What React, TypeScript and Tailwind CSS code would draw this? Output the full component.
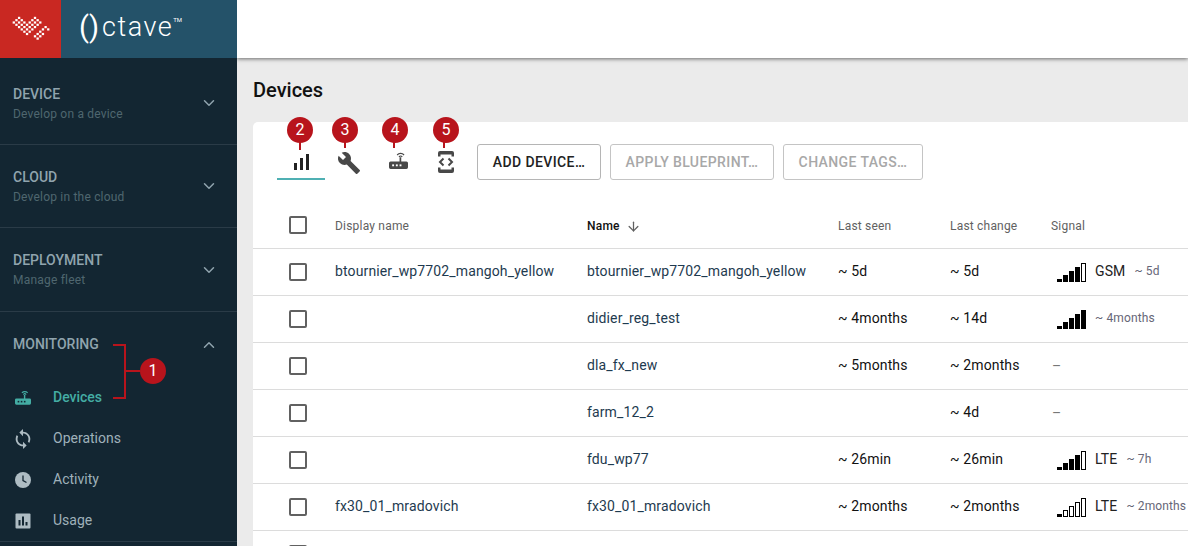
import React from 'react';
import { ChevronDown, ChevronUp, ArrowDown } from 'lucide-react';

const sections = [
  { title: 'DEVICE', sub: 'Develop on a device', h: 'h-[87px] pt-[4px]' },
  { title: 'CLOUD', sub: 'Develop in the cloud', h: 'h-[83px]' },
  { title: 'DEPLOYMENT', sub: 'Manage fleet', h: 'h-[84px]' },
];

const rows = [
  { display: 'btournier_wp7702_mangoh_yellow', name: 'btournier_wp7702_mangoh_yellow', seen: '~ 5d', change: '~ 5d', level: 4, net: 'GSM', ago: '~ 5d' },
  { display: '', name: 'didier_reg_test', seen: '~ 4months', change: '~ 14d', level: 5, net: '', ago: '~ 4months' },
  { display: '', name: 'dla_fx_new', seen: '~ 5months', change: '~ 2months', level: 0, net: '', ago: '' },
  { display: '', name: 'farm_12_2', seen: '', change: '~ 4d', level: 0, net: '', ago: '' },
  { display: '', name: 'fdu_wp77', seen: '~ 26min', change: '~ 26min', level: 4, net: 'LTE', ago: '~ 7h' },
  { display: 'fx30_01_mradovich', name: 'fx30_01_mradovich', seen: '~ 2months', change: '~ 2months', level: 1, net: 'LTE', ago: '~ 2months' },
];

// top and bottom lattice row of the logo band, per column
const logoTop = [4, 3, 2, 1, 2, 3, 4, 3, 2, 1, 2, 3, 4, 5, 6];
const logoBottom = [4, 3, 6, 7, 8, 9, 10, 9, 8, 9, 10, 9, 8, 5, 6];

function Logo() {
  const cells: [number, number][] = [];
  logoTop.forEach((top, i) => {
    for (let j = top; j <= logoBottom[i]; j++) {
      if ((i + j) % 2 !== 0) continue;
      // one diagonal seam each side gives the woven look of the mark
      const seam = i <= 6 ? (j - i + 20) % 8 === 0 : (j + i) % 8 === 0;
      if (!seam) cells.push([i, j]);
    }
  });
  return (
    <svg width="41" height="28" viewBox="0 0 41 28" fill="#fff">
      {cells.map(([i, j]) => (
        <rect key={`${i}-${j}`} x={i * 2.65} y={j * 2.300 - 0.500} width="2.300" height="2.200" />
      ))}
    </svg>
  );
}

function RouterIcon({ className, dot }: { className?: string; dot: string }) {
  return (
    <svg viewBox="1 1 18 17" fill="currentColor" className={className}>
      <path d="M1 11.500a1.500 1.500 0 0 1 1.500-1.500H11V6h1.600v4h4.900a1.500 1.500 0 0 1 1.500 1.500v4a1.500 1.500 0 0 1-1.500 1.500h-15A1.500 1.500 0 0 1 1 15.500z" />
      <rect x="4" y="12.700" width="1.800" height="1.800" fill={dot} />
      <rect x="7.500" y="12.700" width="1.800" height="1.800" fill={dot} />
      <rect x="11" y="12.700" width="1.800" height="1.800" fill={dot} />
      <path d="M8.300 3.400a5 5 0 0 1 7.400 0l-.9.8a3.800 3.800 0 0 0-5.600 0zM10 5.200a2.600 2.600 0 0 1 4 0l-.9.8a1.400 1.400 0 0 0-2.200 0z" />
    </svg>
  );
}

function Signal({ level }: { level: number }) {
  const heights = ['h-[3px]', 'h-[7px]', 'h-[11px]', 'h-[15px]', 'h-[19px]'];
  return (
    <div className="flex w-[30px] items-end gap-px">
      {heights.map((h, i) => (
        <div key={i} className={`${h} w-[5px] border border-black ${i < level ? 'bg-black' : 'bg-white'}`} />
      ))}
    </div>
  );
}

function Badge({ n, className }: { n: number; className: string }) {
  return (
    <div className={`absolute z-30 flex h-[26px] w-[26px] items-center justify-center rounded-full bg-[#b8141c] text-[16px] text-white ${className}`}>
      {n}
    </div>
  );
}

function Checkbox() {
  return <div className="h-[18px] w-[18px] rounded-[2px] border-2 border-[#616161]" />;
}

export default function App() {
  return (
    <div className="relative flex h-[546px] w-[1188px] overflow-hidden bg-[#ebebeb] font-['Roboto',sans-serif]">
      <aside className="z-20 flex h-full w-[237px] shrink-0 flex-col bg-[#132632]">
        <div className="flex h-[58px] shrink-0">
          <div className="flex w-[61px] items-center justify-center bg-[#c92822]">
            <Logo />
          </div>
          <div className="flex flex-1 items-center bg-[#245269] pl-[18px] font-light leading-none text-white">
            <span className="mb-[3px] text-[29px] font-normal">()</span>
            <span className="mb-[3px] ml-[3px] text-[27px] tracking-[1.500px]">ctave</span>
            <span className="mb-[18px] text-[6px] font-normal">TM</span>
          </div>
        </div>
        {sections.map((s) => (
          <div key={s.title} className={`flex ${s.h} shrink-0 items-center justify-between border-b border-[#2a3b47] pl-[13px] pr-[19px]`}>
            <div>
              <div className="text-[14px] font-medium leading-[18px] text-[#90a4ae]">{s.title}</div>
              <div className="mt-[3px] text-[12px] leading-[16px] tracking-[0.2px] text-[#4f666f]">{s.sub}</div>
            </div>
            <ChevronDown size={18} className="text-[#90a4ae]" />
          </div>
        ))}
        <div className="flex h-[65px] shrink-0 items-center justify-between pl-[13px] pr-[19px]">
          <div className="text-[14px] font-medium text-[#90a4ae]">MONITORING</div>
          <ChevronUp size={18} className="text-[#90a4ae]" />
        </div>
        <div className="flex h-[41px] shrink-0 items-center gap-[22px] pl-[15px] text-[14px] font-medium text-[#44ada4]">
          <RouterIcon className="h-[16px] w-[16px]" dot="#132632" />
          <span>Devices</span>
        </div>
        <div className="flex h-[41px] shrink-0 items-center gap-[22px] pl-[15px] text-[14px] text-[#9fb1ba]">
          <div className="flex w-[16px] justify-center">
            <svg viewBox="0 0 24 24" fill="#aebcc3" className="h-[22px] w-[22px] shrink-0">
              <path d="M12 4V1L8 5l4 4V6c3.310 0 6 2.690 6 6 0 1.010-.25 1.970-.7 2.800l1.460 1.460C19.540 15.030 20 13.570 20 12c0-4.420-3.580-8-8-8zm0 14c-3.310 0-6-2.690-6-6 0-1.010.25-1.970.7-2.800L5.240 7.740C4.460 8.970 4 10.430 4 12c0 4.420 3.580 8 8 8v3l4-4-4-4v3z" />
            </svg>
          </div>
          <span>Operations</span>
        </div>
        <div className="flex h-[41px] shrink-0 items-center gap-[22px] pl-[15px] text-[14px] text-[#9fb1ba]">
          <svg viewBox="0 0 16 16" className="h-[16px] w-[16px]">
            <circle cx="8" cy="8" r="8" fill="#aebcc3" />
            <path d="M8 3.500V8.500L11.500 10.500" stroke="#132632" strokeWidth="1.300" fill="none" />
          </svg>
          <span>Activity</span>
        </div>
        <div className="flex h-[41px] shrink-0 items-center gap-[22px] pl-[15px] text-[14px] text-[#9fb1ba]">
          <svg viewBox="0 0 16 16" className="h-[16px] w-[16px]">
            <rect width="15" height="15" x="0.500" y="0.500" rx="1" fill="#aebcc3" />
            <path d="M3.500 7h2v5.500h-2zM7 3.500h2v9H7zM10.500 9h2v3.500h-2z" fill="#132632" />
          </svg>
          <span>Usage</span>
        </div>
        <div className="h-px bg-[#2a3b47]" />
      </aside>

      <main className="flex min-w-0 flex-1 flex-col">
        <div className="z-10 h-[58px] shrink-0 bg-white shadow-[0_1px_4px_rgba(0,0,0,0.55)]" />
        <div className="flex-1 pl-[16px]">
          <h1 className="mt-[20px] h-[44px] text-[20px] font-medium leading-[24px] text-[#111]">Devices</h1>
          <div className="w-[1000px] rounded-tl-[5px] bg-white">
            <div className="flex h-[80px] items-start pl-[24px] pt-[21px]">
              <div className="flex h-[37px] w-[48px] items-start justify-center border-b-2 border-[#4fb0b3] pt-[11px]">
                <div className="flex items-end gap-[3px]">
                  <div className="h-[7px] w-[3px] bg-[#222]" />
                  <div className="h-[12px] w-[3px] bg-[#222]" />
                  <div className="h-[16px] w-[3px] bg-[#222]" />
                </div>
              </div>
              <div className="flex h-[37px] w-[48px] items-start justify-center pt-[8px]">
                <svg viewBox="0 0 24 24" fill="#484848" className="h-[24px] w-[24px]">
                  <path d="M22.700 19l-9.100-9.100c.9-2.300.4-5-1.500-6.900-2-2-5-2.400-7.400-1.300L9 6 6 9 1.600 4.700C.4 7.100.9 10.100 2.900 12.100c1.900 1.900 4.600 2.400 6.900 1.500l9.100 9.100c.4.400 1 .4 1.400 0l2.300-2.300c.5-.4.5-1.100.1-1.400z" />
                </svg>
              </div>
              <div className="flex h-[37px] w-[48px] items-start justify-center pl-[2px] pt-[9px] text-[#484848]">
                <RouterIcon className="h-[18px] w-[19px]" dot="#fff" />
              </div>
              <div className="flex h-[37px] w-[48px] items-start justify-center pl-[2px] pt-[8px]">
                <svg viewBox="0 0 16 22" fill="#484848" className="h-[22px] w-[16px]">
                  <path d="M2 0h12a2 2 0 0 1 2 2v3.500h-2.500V3.500h-11v2H0V2a2 2 0 0 1 2-2zM0 16.500h2.500v2h11v-2H16V20a2 2 0 0 1-2 2H2a2 2 0 0 1-2-2z" />
                  <path d="M5.500 7.500 2 11l3.500 3.500M10.500 7.500 14 11l-3.500 3.500" fill="none" stroke="#484848" strokeWidth="2" />
                </svg>
              </div>
              <div className="ml-[8px] mt-px flex gap-[9px]">
                <button className="h-[36px] w-[124px] rounded-[3px] border border-[#b5b5b5] text-[14px] font-medium tracking-[0.4px] text-[#222]">ADD DEVICE…</button>
                <button className="h-[36px] w-[164px] rounded-[3px] border border-[#c4c4c4] text-[14px] font-medium tracking-[0.4px] text-[#a8a8a8]">APPLY BLUEPRINT…</button>
                <button className="h-[36px] w-[140px] rounded-[3px] border border-[#c4c4c4] text-[14px] font-medium tracking-[0.4px] text-[#a8a8a8]">CHANGE TAGS…</button>
              </div>
            </div>
            <div className="grid h-[47px] grid-cols-[82px_252px_251px_112px_101px_1fr] items-center border-b border-[#dcdcdc] text-[12px] tracking-[0.2px] text-[#616161]">
              <div className="pl-[36px]"><Checkbox /></div>
              <div className="pt-[2px]">Display name</div>
              <div className="flex items-center gap-[6px] pt-[2px] font-medium text-[#111]">
                Name <ArrowDown size={15} className="text-[#616161]" />
              </div>
              <div className="pt-[2px]">Last seen</div>
              <div className="pt-[2px]">Last change</div>
              <div className="pt-[2px]">Signal</div>
            </div>
            {rows.map((r) => (
              <div key={r.name} className="grid h-[47px] grid-cols-[82px_252px_251px_112px_101px_1fr] items-center border-b border-[#dcdcdc] text-[14px] tracking-[0.13px]">
                <div className="pl-[36px]"><Checkbox /></div>
                <div className="pb-[2px] text-[#1e3a4f]">{r.display}</div>
                <div className="pb-[2px] text-[#1e3a4f]">{r.name}</div>
                <div className="pb-[2px] text-[#111]">{r.seen}</div>
                <div className="pb-[2px] text-[#111]">{r.change}</div>
                <div className="flex items-center whitespace-nowrap pl-[6px]">
                  {r.level > 0 ? <Signal level={r.level} /> : <span className="-ml-[5px] text-[#777]">–</span>}
                  {r.net && <span className="ml-[8px] pb-[2px] text-[#222]">{r.net}</span>}
                  {r.ago && <span className={`${r.net ? 'ml-[9px]' : 'ml-[8px]'} pb-[2px] text-[12px] text-[#667]`}>{r.ago}</span>}
                </div>
              </div>
            ))}
            <div className="h-[47px] pl-[36px] pt-[14px]"><Checkbox /></div>
          </div>
        </div>
      </main>

      {/* annotations sitting over the screenshot */}
      <div className="absolute left-[113px] top-[344px] z-30 h-[55px] w-[13px] border-y-2 border-r-2 border-[#b8141c]" />
      <div className="absolute left-[126px] top-[370px] z-30 h-[2px] w-[14px] bg-[#b8141c]" />
      <Badge n={1} className="left-[140px] top-[358px]" />
      <div className="absolute left-[299px] top-[140px] z-30 h-[10px] w-[2px] bg-[#b8141c]" />
      <div className="absolute left-[344px] top-[140px] z-30 h-[8px] w-[2px] bg-[#b8141c]" />
      <div className="absolute left-[393px] top-[140px] z-30 h-[8px] w-[2px] bg-[#b8141c]" />
      <div className="absolute left-[443px] top-[140px] z-30 h-[8px] w-[2px] bg-[#b8141c]" />
      <Badge n={2} className="left-[287px] top-[117px]" />
      <Badge n={3} className="left-[332px] top-[117px]" />
      <Badge n={4} className="left-[382px] top-[117px]" />
      <Badge n={5} className="left-[433px] top-[117px]" />
    </div>
  );
}
